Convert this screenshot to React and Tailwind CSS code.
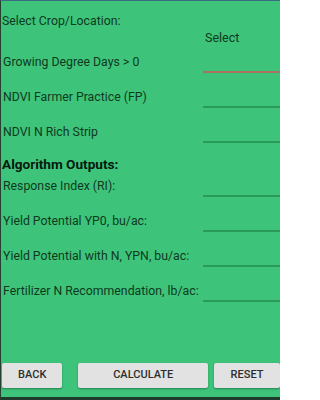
import React from 'react'

const font = { fontFamily: 'Roboto, "Noto Sans", Arial, sans-serif' }

function InputRow({ label, focused }) {
  return (
    <div className="flex items-start h-[35px]">
      <span className="mt-[10px] ml-[2px] text-[12.3px] leading-[14px] text-[#0f3a20] whitespace-nowrap">{label}</span>
      <div className={`ml-auto mt-[26px] w-[77px] h-[2px] ${focused ? 'bg-[#a9745f]' : 'bg-[#2a9a57]'}`} />
    </div>
  )
}

export default function App() {
  const inputs = ['Growing Degree Days > 0', 'NDVI Farmer Practice (FP)', 'NDVI N Rich Strip']
  const outputs = [
    'Response Index (RI):',
    'Yield Potential YP0, bu/ac:',
    'Yield Potential with N, YPN, bu/ac:',
    'Fertilizer N Recommendation, lb/ac:',
  ]

  return (
    <div style={font} className="w-[280px] h-[400px] overflow-hidden flex flex-col bg-[#3dc47a] border-t border-t-[#3d6a82] border-l border-l-[#24402f]">
      {/* Crop / location */}
      <div className="h-[24px] pt-[7px]">
        <span className="ml-[1px] text-[12.3px] leading-[14px] text-[#0f3a20]">Select Crop/Location:</span>
      </div>
      <div className="h-[20px] pl-[204px]">
        <span className="text-[12.5px] leading-[14px] text-[#0f3a20]">Select</span>
      </div>

      {inputs.map((l, i) => (
        <InputRow key={l} label={l} focused={i === 0} />
      ))}

      <div className="h-[19px] pt-[2px]">
        <span className="ml-[1px] text-[13.6px] leading-[14px] font-bold text-[#06190d]">Algorithm Outputs:</span>
      </div>

      {outputs.map(l => (
        <InputRow key={l} label={l} />
      ))}

      {/* Buttons */}
      <div className="flex-1 flex items-end pb-[9px]">
        <div className="flex items-center w-full">
          <button className="ml-[1px] w-[62px] h-[25px] rounded-[2px] bg-[#e2e2e2] shadow-[0_1px_2px_rgba(0,0,0,0.35)] text-[11px] font-medium text-[#2e2e2e]">BACK</button>
          <button className="ml-[16px] w-[133px] h-[25px] rounded-[2px] bg-[#e2e2e2] shadow-[0_1px_2px_rgba(0,0,0,0.35)] text-[11px] font-medium text-[#2e2e2e]">CALCULATE</button>
          <button className="ml-[6px] w-[66px] shrink-0 h-[25px] rounded-[2px] bg-[#e2e2e2] shadow-[0_1px_2px_rgba(0,0,0,0.35)] text-[11px] font-medium text-[#2e2e2e]">RESET</button>
        </div>
      </div>
      <div className="h-[3px] bg-[#1f3b2b]" />
    </div>
  )
}
